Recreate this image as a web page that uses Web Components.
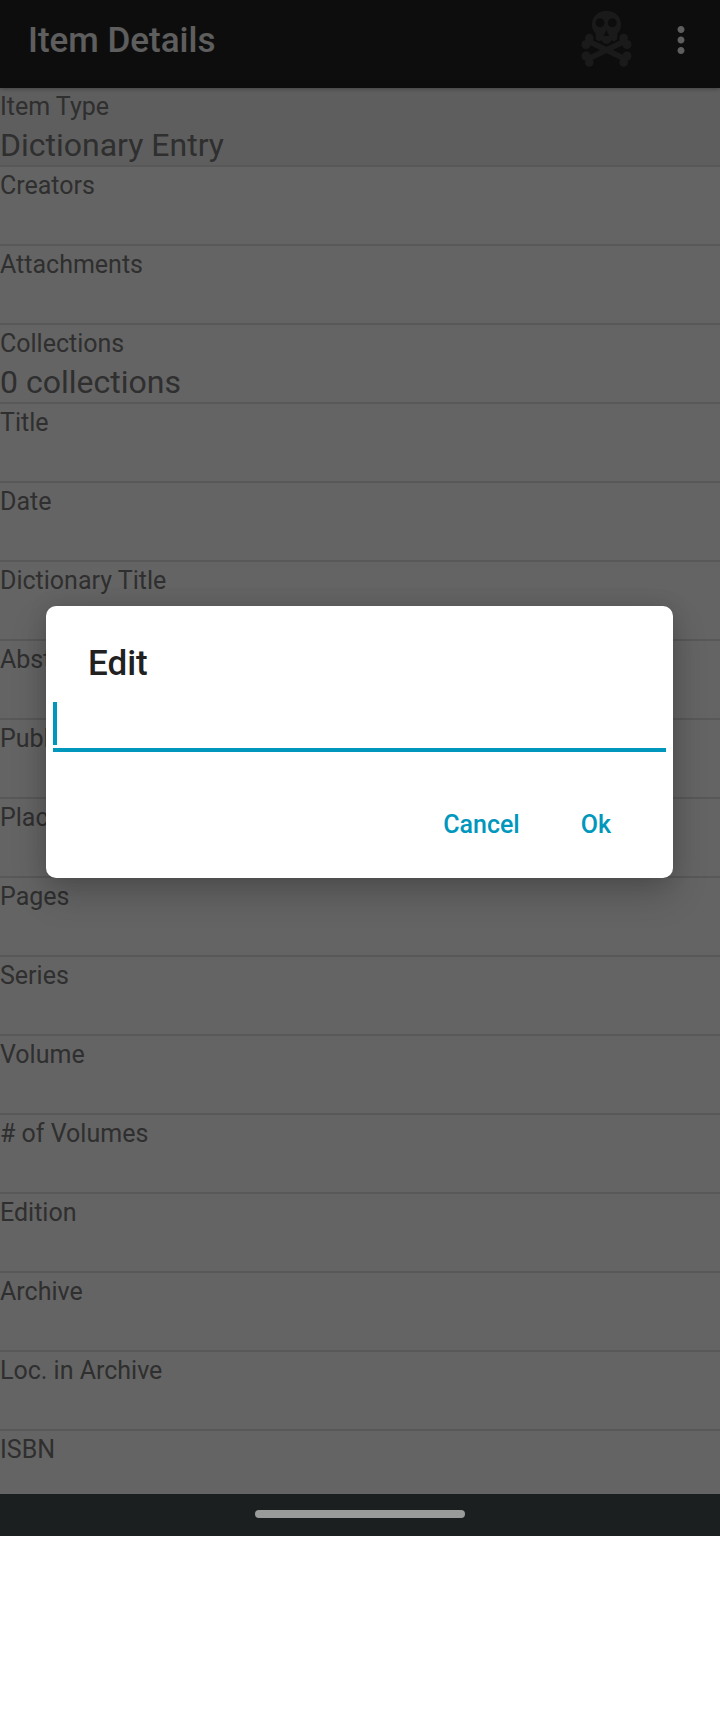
<!DOCTYPE html>
<html lang="en">
<head>
<meta charset="utf-8">
<meta name="viewport" content="width=device-width, initial-scale=1">
<title>Item Details</title>
<style>
  body { margin: 0; background: #fff; font-family: Roboto, sans-serif; color: #212121; }
</style>
</head>
<body>
<phone-screen>
  <app-bar slot="page" heading="Item Details"></app-bar>
  <field-list slot="page">
    <item-field label="Item Type" pressed>Dictionary Entry</item-field>
    <item-field label="Creators"></item-field>
    <item-field label="Attachments"></item-field>
    <item-field label="Collections">0 collections</item-field>
    <item-field label="Title"></item-field>
    <item-field label="Date"></item-field>
    <item-field label="Dictionary Title"></item-field>
    <item-field label="Abstract"></item-field>
    <item-field label="Publisher"></item-field>
    <item-field label="Place"></item-field>
    <item-field label="Pages"></item-field>
    <item-field label="Series"></item-field>
    <item-field label="Volume"></item-field>
    <item-field label="# of Volumes"></item-field>
    <item-field label="Edition"></item-field>
    <item-field label="Archive"></item-field>
    <item-field label="Loc. in Archive"></item-field>
    <item-field label="ISBN" last></item-field>
  </field-list>
  <edit-dialog slot="overlay" heading="Edit">
    <text-button slot="actions">Cancel</text-button>
    <text-button slot="actions">Ok</text-button>
  </edit-dialog>
  <gesture-bar slot="nav"></gesture-bar>
</phone-screen>

<script>
function define(name, html, setup) {
  const template = document.createElement('template');
  template.innerHTML = html;
  customElements.define(name, class extends HTMLElement {
    constructor() {
      super();
      this.attachShadow({ mode: 'open' }).append(template.content.cloneNode(true));
    }
    connectedCallback() { if (setup) setup(this, this.shadowRoot); }
  });
}

define('phone-screen', `
  <style>
    :host { display: block; }
    .window { position: relative; background: #fafafa; }
    .scrim { position: absolute; inset: 0; display: flex; align-items: center; justify-content: center;
      box-sizing: border-box; padding: 0 47px 10px 46px; background: rgba(0,0,0,.6); overflow: hidden; }
    ::slotted(edit-dialog) { flex: 1; }
  </style>
  <div class="window">
    <slot name="page"></slot>
    <div class="scrim"><slot name="overlay"></slot></div>
  </div>
  <slot name="nav"></slot>`);

define('app-bar', `
  <style>
    :host { display: block; position: relative; background: #212121; box-shadow: 0 1px 4px rgba(0,0,0,.3); }
    header { display: flex; align-items: center; min-height: 80px; padding: 0 18px 8px 28px; }
    h1 { flex: 1; margin: 0; padding-top: 2px; font-size: 35px; line-height: 40px; font-weight: 500; color: #ebebeb; }
    button { display: flex; align-items: center; justify-content: center; border: 0; padding: 0; background: none; height: 64px; }
    .action { width: 64px; margin-right: 20px; color: #424242; }
    .menu { width: 42px; color: #ebebeb; }
    svg { display: block; fill: currentColor; }
  </style>
  <header>
    <h1></h1>
    <button class="action" type="button" aria-label="Danger actions">
      <svg width="64" height="64" viewBox="0 2 64 64">
        <path fill-rule="evenodd" d="M30.500 5C21.500 5 16 11 16 18.500c0 4 1.500 7 3.700 9V31.500a3.500 3.500 0 0 0 6 2.600 5 5 0 0 0 9.600 0 3.500 3.500 0 0 0 6-2.600V27.500c2.200-2 3.700-5 3.700-9C45 11 39.500 5 30.500 5zM24 12.200a4.500 4.500 0 1 1 0 9 4.500 4.500 0 1 1 0-9zM36.300 12.200a4.500 4.500 0 1 1 0 9 4.500 4.500 0 1 1 0-9zM30.300 24l3 6h-6z"/>
        <path d="M12 35L49 53M49 35L12 53" stroke="currentColor" stroke-width="5.500"/>
        <circle cx="13.300" cy="32" r="4.300"/><circle cx="10" cy="38.500" r="4.500"/>
        <circle cx="47.700" cy="32" r="4.300"/><circle cx="51" cy="38.500" r="4.500"/>
        <circle cx="10" cy="50" r="4.500"/><circle cx="13.300" cy="56.500" r="4.300"/>
        <circle cx="51" cy="50" r="4.500"/><circle cx="47.700" cy="56.500" r="4.300"/>
      </svg>
    </button>
    <button class="menu" type="button" aria-label="More options">
      <svg width="42" height="42" viewBox="0 0 24 24"><path d="M12 8c1.100 0 2-.9 2-2s-.9-2-2-2-2 .9-2 2 .9 2 2 2zm0 2c-1.100 0-2 .9-2 2s.9 2 2 2 2-.9 2-2-.9-2-2-2zm0 6c-1.100 0-2 .9-2 2s.9 2 2 2 2-.9 2-2-.9-2-2-2z"/></svg>
    </button>
  </header>`, (host, root) => {
  root.querySelector('h1').textContent = host.getAttribute('heading');
});

define('field-list', `
  <style>:host { display: block; }</style>
  <slot></slot>`);

define('item-field', `
  <style>
    :host { display: block; box-sizing: border-box; min-height: 79px; padding-top: 4px; border-bottom: 2px solid #dcdcdc; color: #757575; }
    :host([pressed]) { background: #ebebeb; }
    :host([last]) { min-height: 63px; border-bottom: 0; }
    .label { font-size: 25px; line-height: 30px; }
    .value { font-size: 32px; line-height: 38px; padding-top: 4px; }
  </style>
  <div class="label"></div>
  <div class="value"><slot></slot></div>`, (host, root) => {
  root.querySelector('.label').textContent = host.getAttribute('label');
});

define('edit-dialog', `
  <style>
    :host { display: block; }
    section { box-sizing: border-box; padding: 37px 7px 22px; border-radius: 10px; background: #fff;
      box-shadow: 0 16px 36px rgba(0,0,0,.2), 0 0 20px rgba(0,0,0,.12); }
    h2 { margin: 0; padding-left: 35px; font-size: 35px; line-height: 42px; font-weight: 500; color: #212121; }
    .entry { position: relative; padding-top: 15px; }
    input { display: block; box-sizing: border-box; width: 100%; height: 52px; border: 0; border-bottom: 4px solid #0097bd;
      border-radius: 0; padding: 0; outline: 0; background: none; font: 32px/40px Roboto, sans-serif; caret-color: transparent; color: #212121; }
    .caret { position: absolute; left: 0; top: 17px; width: 4px; height: 43px; background: #0097bd; }
    footer { display: flex; justify-content: flex-end; gap: 21px; padding: 41px 35px 0 0; }
  </style>
  <section role="dialog" aria-labelledby="heading">
    <h2 id="heading"></h2>
    <div class="entry"><input type="text" aria-labelledby="heading"><span class="caret"></span></div>
    <footer><slot name="actions"></slot></footer>
  </section>`, (host, root) => {
  root.querySelector('h2').textContent = host.getAttribute('heading');
});

define('text-button', `
  <style>
    :host { display: block; }
    button { display: block; border: 0; background: none; height: 63px; padding: 0 20px; font: 500 25px/30px Roboto, sans-serif; color: #0097bd; }
  </style>
  <button type="button"><slot></slot></button>`);

define('gesture-bar', `
  <style>
    :host { display: flex; align-items: center; justify-content: center; height: 42px; box-sizing: border-box; padding-bottom: 2px; background: #1b1f20; }
    span { width: 210px; height: 8px; border-radius: 4px; background: #999b9a; }
  </style>
  <span></span>`);
</script>
</body>
</html>
